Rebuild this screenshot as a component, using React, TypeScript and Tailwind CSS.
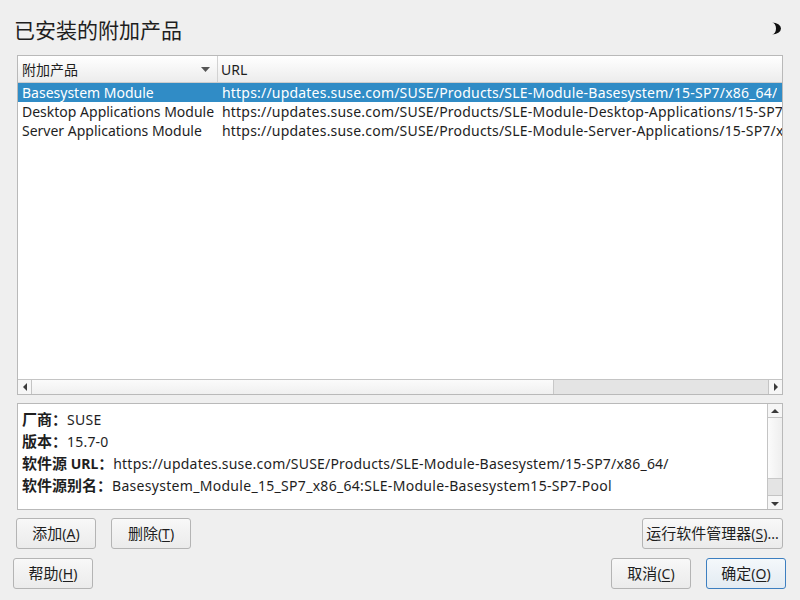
import React from "react";

const rows = [
  {
    name: "Basesystem Module",
    url: "https://updates.suse.com/SUSE/Products/SLE-Module-Basesystem/15-SP7/x86_64/",
  },
  {
    name: "Desktop Applications Module",
    url: "https://updates.suse.com/SUSE/Products/SLE-Module-Desktop-Applications/15-SP7/x86_64/",
  },
  {
    name: "Server Applications Module",
    url: "https://updates.suse.com/SUSE/Products/SLE-Module-Server-Applications/15-SP7/x86_64/",
  },
];

function Btn({
  label,
  hot,
  rest,
  primary,
  className,
}: {
  label: string;
  hot: string;
  rest: string;
  primary?: boolean;
  className?: string;
}) {
  return (
    <button
      className={`h-[31px] rounded-[3px] border text-[14px] text-[#1e1e1e] flex items-center justify-center ${
        primary
          ? "border-[#3d7fc0] bg-gradient-to-b from-[#f4f8fb] to-[#e3ebf2]"
          : "border-[#b4b4b4] bg-gradient-to-b from-[#f8f8f8] to-[#ebebeb]"
      } ${className ?? ""}`}
    >
      <span className="text-[15px]">{label}</span>(<span className="underline underline-offset-2">{hot}</span>){rest}
    </button>
  );
}

function Arrow({ dir }: { dir: "left" | "right" | "up" | "down" }) {
  const pts =
    dir === "left"
      ? "5,1 5,9 1,5"
      : dir === "right"
      ? "1,1 1,9 5,5"
      : dir === "up"
      ? "1,6 9,6 5,2"
      : "1,3 9,3 5,7";
  const w = dir === "left" || dir === "right" ? 6 : 10;
  const h = dir === "left" || dir === "right" ? 10 : 8;
  return (
    <svg width={w} height={h} viewBox={`0 0 ${w} ${h}`}>
      <polygon points={pts} fill="#3a3a3a" />
    </svg>
  );
}

export default function App() {
  return (
    <div
      className="w-[800px] h-[600px] bg-[#efefef] flex flex-col text-[#1e1e1e] overflow-hidden"
      style={{ fontFamily: '"Noto Sans", "Noto Sans CJK SC", sans-serif' }}
    >
      <div className="flex items-center justify-between pl-[14px] pr-[18px] pt-[16px] h-[44px]">
        <h1 className="text-[21px] leading-[28px] text-[#1e1e1e]">已安装的附加产品</h1>
        <svg width="11" height="13" viewBox="0 0 11 13" className="-mt-[4px]">
          <path d="M1 0.5 A9 6 0 0 1 1 12.5 A4 6 0 0 0 1 0.5 Z" fill="#111" />
        </svg>
      </div>

      <div className="mx-[17px] mt-[11px] h-[340px] border border-[#b9b9b9] bg-white flex flex-col">
        <div className="h-[27px] flex border-b border-[#cdcdcd] bg-gradient-to-b from-white to-[#ececec] text-[14px]">
          <div className="w-[200px] flex items-center justify-between pl-[4px] pr-[7px] border-r border-[#d2d2d2]">
            <span>附加产品</span>
            <svg width="9" height="5" viewBox="0 0 9 5">
              <polygon points="0,0 9,0 4.5,5" fill="#555" />
            </svg>
          </div>
          <div className="flex items-center pl-[3px]">URL</div>
        </div>
        <div className="flex-1 overflow-hidden text-[14px]">
          {rows.map((r, i) => (
            <div
              key={r.name}
              className={`h-[19px] flex items-center whitespace-nowrap ${
                i === 0 ? "bg-[#308cc6] text-white" : ""
              }`}
            >
              <div className="w-[201px] shrink-0 pl-[4px] overflow-hidden">{r.name}</div>
              <div className="pl-[3px] overflow-hidden tracking-[0.2px]">{r.url}</div>
            </div>
          ))}
        </div>
        <div className="h-[15px] flex border-t border-[#c4c4c4]">
          <div className="w-[14px] flex items-center justify-center border-r border-[#c4c4c4] bg-[#f6f6f6]">
            <Arrow dir="left" />
          </div>
          <div className="w-[522px] bg-gradient-to-b from-[#fbfbfb] to-[#f0f0f0] border-r border-[#c8c8c8]" />
          <div className="flex-1 bg-[#e4e4e4]" />
          <div className="w-[14px] flex items-center justify-center border-l border-[#c4c4c4] bg-[#f6f6f6]">
            <Arrow dir="right" />
          </div>
        </div>
      </div>

      <div className="mx-[17px] mt-[8px] h-[107px] border border-[#b9b9b9] bg-white flex">
        <div className="flex-1 pl-[4px] pt-[4px] text-[14px] whitespace-nowrap overflow-hidden">
          <div className="h-[22px] flex items-center">
            <b className="text-[15px]">厂商：</b>
            <span className="tracking-[0.3px]">SUSE</span>
          </div>
          <div className="h-[22px] flex items-center">
            <b className="text-[15px]">版本：</b>
            <span className="tracking-[0.2px]">15.7-0</span>
          </div>
          <div className="h-[22px] flex items-center">
            <b className="text-[15px]">软件源</b>
            <b>&nbsp;URL</b>
            <b className="text-[15px]">：</b>
            <span className="tracking-[0.2px]">
              https://updates.suse.com/SUSE/Products/SLE-Module-Basesystem/15-SP7/x86_64/
            </span>
          </div>
          <div className="h-[22px] flex items-center">
            <b className="text-[15px]">软件源别名：</b>
            <span className="tracking-[0.3px]">
              Basesystem_Module_15_SP7_x86_64:SLE-Module-Basesystem15-SP7-Pool
            </span>
          </div>
        </div>
        <div className="w-[15px] flex flex-col border-l border-[#c4c4c4]">
          <div className="h-[14px] flex items-center justify-center border-b border-[#c4c4c4] bg-[#f6f6f6]">
            <Arrow dir="up" />
          </div>
          <div className="h-[61px] bg-gradient-to-r from-[#fbfbfb] to-[#eeeeee] border-b border-[#c8c8c8]" />
          <div className="flex-1 bg-[#e4e4e4]" />
          <div className="h-[14px] flex items-center justify-center border-t border-[#c4c4c4] bg-[#f6f6f6]">
            <Arrow dir="down" />
          </div>
        </div>
      </div>

      <div className="flex items-center justify-between mt-[8px] pl-[16px] pr-[17px]">
        <div className="flex gap-[15px]">
          <Btn label="添加" hot="A" rest="" className="w-[80px]" />
          <Btn label="删除" hot="T" rest="" className="w-[80px]" />
        </div>
        <Btn label="运行软件管理器" hot="S" rest="..." className="w-[141px]" />
      </div>

      <div className="flex items-center justify-between mt-[9px] pl-[13px] pr-[14px]">
        <Btn label="帮助" hot="H" rest="" className="w-[80px]" />
        <div className="flex gap-[15px]">
          <Btn label="取消" hot="C" rest="" className="w-[80px]" />
          <Btn label="确定" hot="O" rest="" primary className="w-[80px]" />
        </div>
      </div>
    </div>
  );
}
